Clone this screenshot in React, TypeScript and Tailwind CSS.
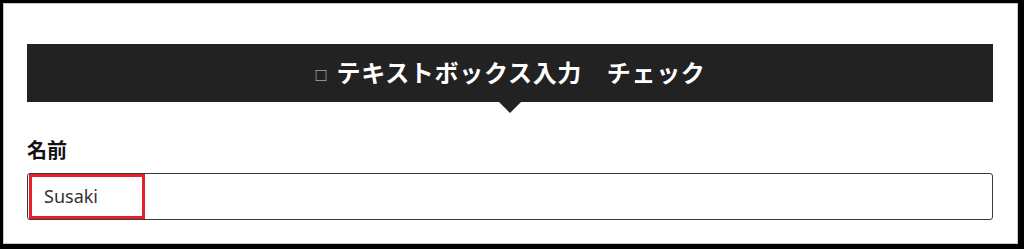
import React from 'react';

export default function App() {
  return (
    <div className="w-[1024px] h-[249px] bg-black pt-[3px] pl-[3px] pr-[6px] pb-[5px]" style={{ fontFamily: '"Noto Sans", "Noto Sans CJK JP", sans-serif' }}>
      <div className="h-full bg-white border border-[#c8c8c8] pl-[23px] pr-[24px] pt-[40px]">
        <div className="relative h-[58px] bg-[#222222] flex items-center justify-center gap-[9px] text-white">
          <span className="text-[13px] leading-none text-[#dddddd] mt-[4px]">□</span>
          <span className="text-[24px] font-bold leading-none tracking-[0.7px]">テキストボックス入力　チェック</span>
          <span className="absolute left-1/2 -translate-x-1/2 top-full w-0 h-0 border-l-[11px] border-r-[11px] border-t-[11px] border-l-transparent border-r-transparent border-t-[#222222]" />
        </div>

        <div className="mt-[39px] text-[20px] font-bold leading-none text-[#111111]">名前</div>

        <div className="relative mt-[12px] h-[47px] border-[1.5px] border-[#3a3a3a] rounded-[3px] flex items-center pl-[16px] text-[18px] text-[#333333]">
          Susaki
          <span className="absolute left-[1px] top-0 bottom-0 w-[116px] border-[3px] border-[#e3202b]" />
        </div>
      </div>
    </div>
  );
}
